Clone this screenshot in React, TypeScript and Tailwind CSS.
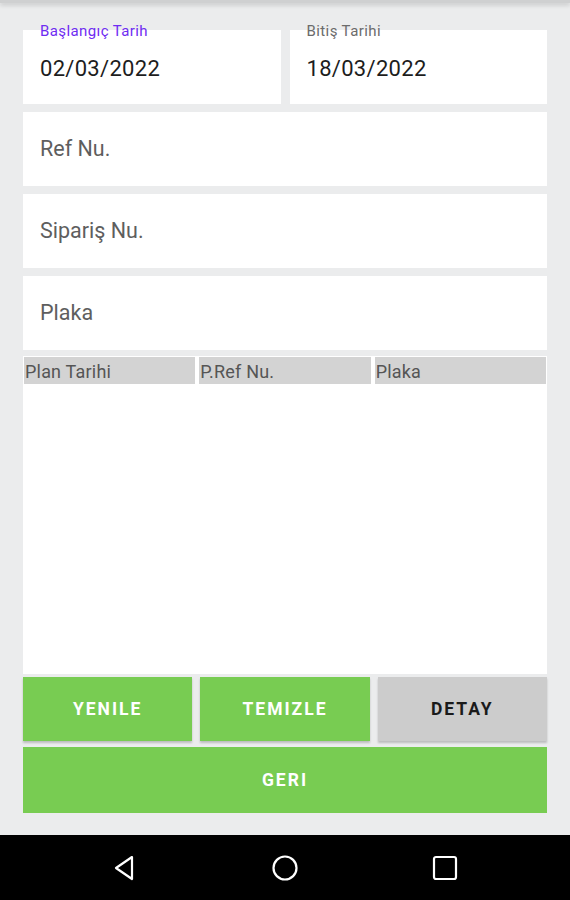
import React from "react";

const font = { fontFamily: "Roboto, 'Noto Sans', sans-serif" };

function DateField({ label, value, active }: { label: string; value: string; active?: boolean }) {
  return (
    <div className="relative flex h-[74px] items-center bg-white pl-[17px] pt-[2px]">
      <span
        className={
          "absolute left-[17px] top-[-6px] text-[15px] leading-[15px] tracking-[0.4px] " +
          (active ? "text-[#6f2cf2]" : "text-[#6b6b6b]")
        }
      >
        {label}
      </span>
      <span className="text-[22px] tracking-[0.3px] text-[#1d1d1d]">{value}</span>
    </div>
  );
}

function TextField({ placeholder }: { placeholder: string }) {
  return (
    <div className="flex h-[74px] items-center bg-white pl-[17px]">
      <span className="text-[21.5px] text-[#5e5e5e]">{placeholder}</span>
    </div>
  );
}

const btn = "h-[64px] text-[17.5px] font-bold tracking-[2px] shadow-[0_2px_2px_rgba(0,0,0,0.2)]";

export default function App() {
  return (
    <div style={font} className="flex h-[900px] w-[570px] flex-col bg-[#ebeced]">
      <div className="h-[3px] bg-[#cfd0d1] shadow-[0_2px_4px_rgba(0,0,0,0.18)]" />

      <div className="flex flex-1 flex-col px-[23px] pt-[27px]">
        <div className="grid grid-cols-2 gap-[9px]">
          <DateField label="Başlangıç Tarih" value="02/03/2022" active />
          <DateField label="Bitiş Tarihi" value="18/03/2022" />
        </div>

        <div className="mt-[8px] flex flex-col gap-[8px]">
          <TextField placeholder="Ref Nu." />
          <TextField placeholder="Sipariş Nu." />
          <TextField placeholder="Plaka" />
        </div>

        <div className="mt-[6px] h-[318px] bg-white px-[1px] pt-[1px]">
          <div className="grid grid-cols-3 gap-[4px]">
            {["Plan Tarihi", "P.Ref Nu.", "Plaka"].map((h) => (
              <div
                key={h}
                className="flex h-[27px] items-center bg-[#d3d3d3] pl-[1px] pt-[1px] text-[18px] tracking-[0.2px] text-[#555555]"
              >
                {h}
              </div>
            ))}
          </div>
        </div>

        <div className="mt-[3px] grid grid-cols-3 gap-[8px]">
          <button className={btn + " bg-[#78cc52] text-white"}>YENILE</button>
          <button className={btn + " bg-[#78cc52] text-white"}>TEMIZLE</button>
          <button className={btn + " bg-[#cccccc] text-[#1a1a1a]"}>DETAY</button>
        </div>

        <button className="mt-[6px] h-[66px] bg-[#78cc52] text-[17.5px] font-bold tracking-[2px] text-white">
          GERI
        </button>
      </div>

      <div className="flex h-[65px] items-center bg-black">
        <div className="flex w-[250px] justify-center">
          <svg width="26" height="28" viewBox="0 0 26 28">
            <path d="M20 3 L4 14 L20 25 Z" fill="none" stroke="white" strokeWidth="2.2" strokeLinejoin="round" />
          </svg>
        </div>
        <div className="flex w-[70px] justify-center">
          <svg width="28" height="28" viewBox="0 0 28 28">
            <circle cx="14" cy="14" r="11.5" fill="none" stroke="white" strokeWidth="2.2" />
          </svg>
        </div>
        <div className="flex w-[250px] justify-center">
          <svg width="26" height="26" viewBox="0 0 26 26">
            <rect x="2" y="2" width="22" height="22" rx="2" fill="none" stroke="white" strokeWidth="2.2" />
          </svg>
        </div>
      </div>
    </div>
  );
}
